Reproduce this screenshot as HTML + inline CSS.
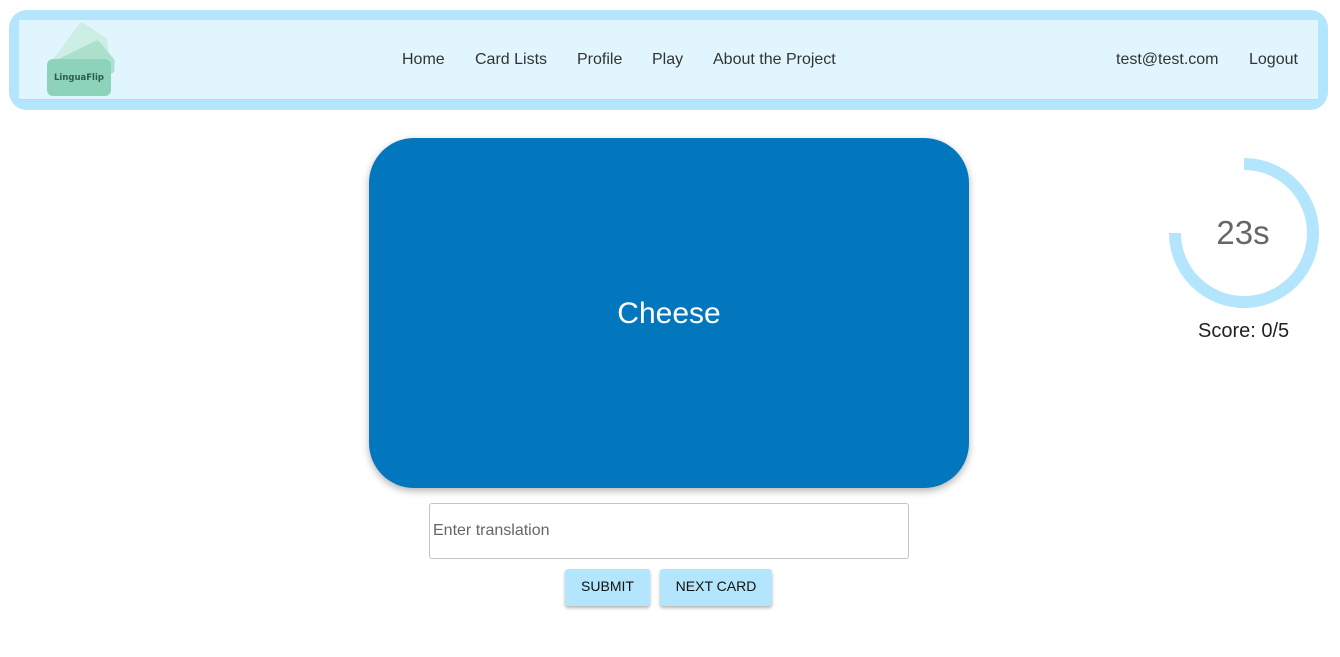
<!DOCTYPE html>
<html><head><style>
body{margin:0;width:1340px;height:657px;background:#fff;font-family:"Liberation Sans",Arial,sans-serif;position:relative;overflow:hidden}
.nav{position:absolute;left:9px;top:10px;width:1319px;height:100px;background:#b3e5fc;border-radius:18px}
.inner{position:absolute;left:10px;top:10px;width:1299px;height:79px;background:#e1f5fe;border-bottom:1px solid #c8d6dc}
.lnk{position:absolute;top:51px;font-size:16px;color:#333}
.card{position:absolute;left:369px;top:138px;width:600px;height:350px;background:#0277bd;border-radius:45px;box-shadow:0 3px 8px rgba(0,0,0,.3);color:#fff;font-size:30px;display:flex;align-items:center;justify-content:center;box-sizing:border-box;padding-top:2px}
.inp{position:absolute;left:429px;top:503px;border:1px solid #c4c4c4;border-radius:3px;font-size:16px;color:#666;line-height:54px;padding-left:3px;box-sizing:border-box;width:480px;height:56px}
.btn{position:absolute;top:569px;height:37px;background:#b3e5fc;border-radius:3px;box-shadow:0 2px 3px rgba(0,0,0,.3);font-size:14px;color:#111;display:flex;align-items:center;justify-content:center;box-sizing:border-box;padding-bottom:3px}
</style></head><body>
<div class="nav"><div class="inner"></div></div>
<svg style="position:absolute;left:0;top:0" width="130" height="105">
<polygon points="54,64 82,26 104,41 106,66" fill="#cdeee5" stroke="#cdeee5" stroke-width="7" stroke-linejoin="round"/>
<polygon points="56,64 97,44 111,61 111,70" fill="#ace0cd" stroke="#ace0cd" stroke-width="7" stroke-linejoin="round"/>
<rect x="47" y="59" width="64" height="37" rx="6" fill="#8dd3bb"/>
<text x="79" y="80" font-size="8.5" font-family="DejaVu Sans,sans-serif" font-weight="bold" text-anchor="middle" fill="#2d5a4b">LinguaFlip</text>
</svg>
<div class="lnk" style="left:402px">Home</div>
<div class="lnk" style="left:475px">Card Lists</div>
<div class="lnk" style="left:577px">Profile</div>
<div class="lnk" style="left:652px">Play</div>
<div class="lnk" style="left:713px">About the Project</div>
<div class="lnk" style="left:1116px">test@test.com</div>
<div class="lnk" style="left:1249px">Logout</div>
<div class="card">Cheese</div>
<div class="inp">Enter translation</div>
<div class="btn" style="left:565px;width:85px">SUBMIT</div>
<div class="btn" style="left:660px;width:112px">NEXT CARD</div>
<svg style="position:absolute;left:1160px;top:149px" width="168" height="168">
<path d="M84 15 A69 69 0 1 1 15 84" fill="none" stroke="#b3e5fc" stroke-width="12"/>
<text x="83" y="95" font-size="33" fill="#666" text-anchor="middle" font-family="Liberation Sans,sans-serif">23s</text>
</svg>
<div style="position:absolute;left:1198px;top:320px;font-size:20px;color:#222">Score: 0/5</div>
</body></html>
